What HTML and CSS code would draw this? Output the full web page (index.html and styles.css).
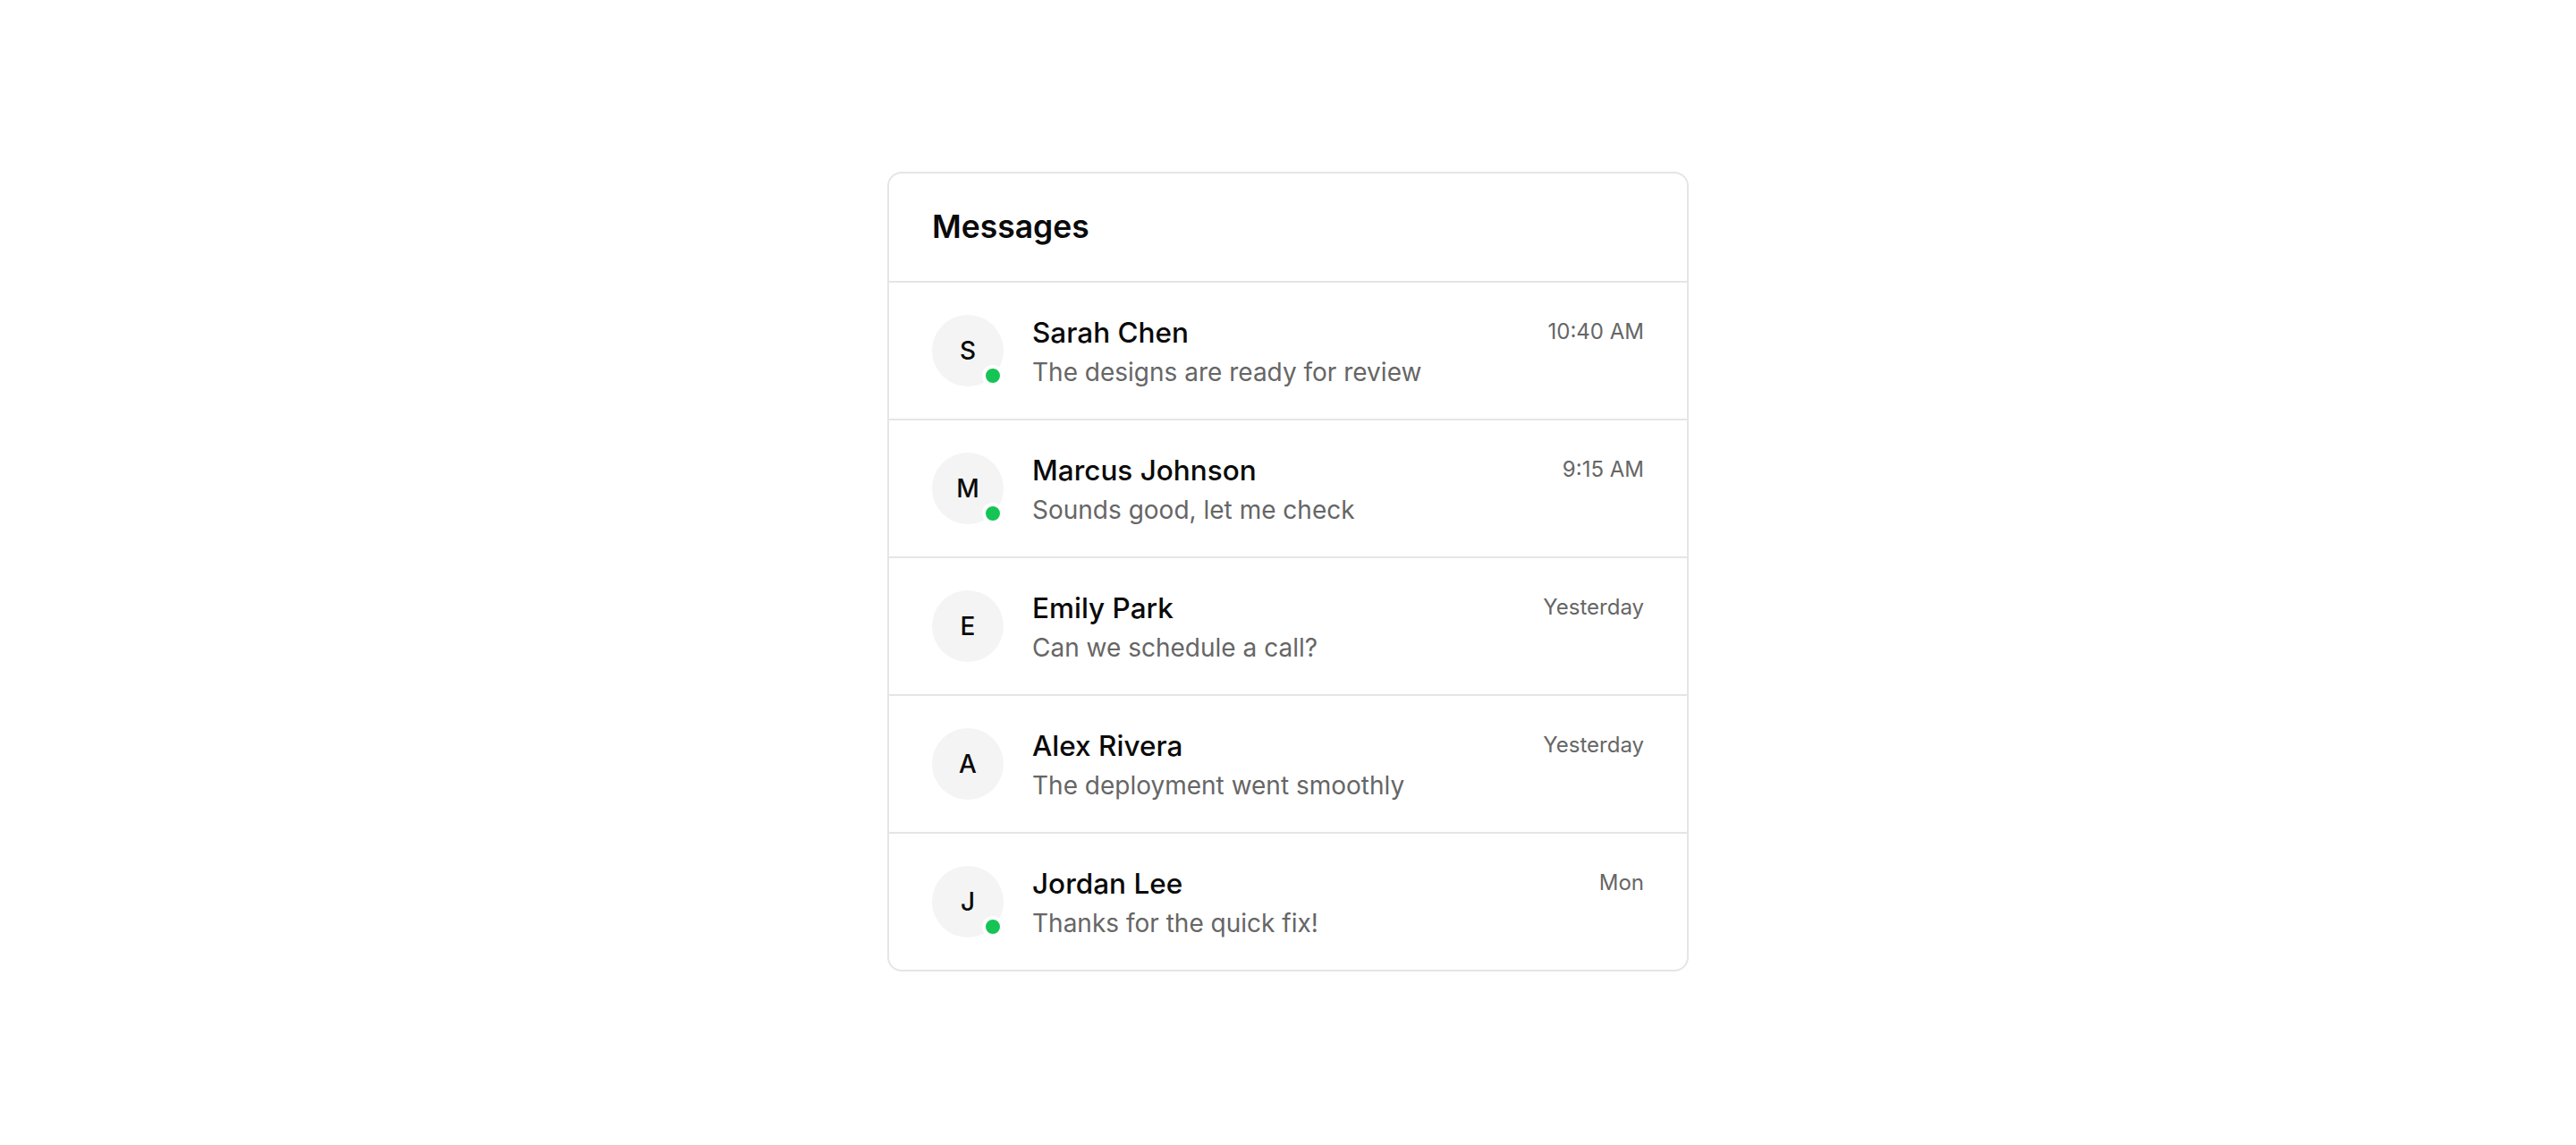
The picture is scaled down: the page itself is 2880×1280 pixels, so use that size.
FILE: index.html
```html
<!DOCTYPE html>
<html lang="en">
<head>
<meta charset="utf-8">
<title>Messages</title>
<link rel="stylesheet" href="styles.css">
</head>
<body>
<main class="page">
  <section class="card">
    <header class="card-header">
      <h1 class="title">Messages</h1>
    </header>
    <ul class="list">
      <li class="item">
        <div class="avatar"><span class="initial">S</span><span class="status"></span></div>
        <div class="content">
          <div class="top"><span class="name">Sarah Chen</span><span class="time">10:40 AM</span></div>
          <p class="preview">The designs are ready for review</p>
        </div>
      </li>
      <li class="item">
        <div class="avatar"><span class="initial">M</span><span class="status"></span></div>
        <div class="content">
          <div class="top"><span class="name">Marcus Johnson</span><span class="time">9:15 AM</span></div>
          <p class="preview">Sounds good, let me check</p>
        </div>
      </li>
      <li class="item">
        <div class="avatar"><span class="initial">E</span></div>
        <div class="content">
          <div class="top"><span class="name">Emily Park</span><span class="time">Yesterday</span></div>
          <p class="preview">Can we schedule a call?</p>
        </div>
      </li>
      <li class="item">
        <div class="avatar"><span class="initial">A</span></div>
        <div class="content">
          <div class="top"><span class="name">Alex Rivera</span><span class="time">Yesterday</span></div>
          <p class="preview">The deployment went smoothly</p>
        </div>
      </li>
      <li class="item">
        <div class="avatar"><span class="initial">J</span><span class="status"></span></div>
        <div class="content">
          <div class="top"><span class="name">Jordan Lee</span><span class="time">Mon</span></div>
          <p class="preview">Thanks for the quick fix!</p>
        </div>
      </li>
    </ul>
  </section>
</main>
</body>
</html>
```
FILE: styles.css
```css
* { box-sizing: border-box; }
html, body {
  margin: 0;
  padding: 0;
  background: #ffffff;
  font-family: Inter, "Noto Sans", "Liberation Sans", sans-serif;
  color: #0a0a0a;
}
.page {
  display: flex;
  justify-content: center;
  padding-top: 192px;
}
.card {
  width: 896px;
  border: 2px solid #e5e5e5;
  border-radius: 16px;
  background: #fff;
  overflow: hidden;
}
.card-header {
  padding: 32px 48px;
  border-bottom: 2px solid #e5e5e5;
}
.title {
  margin: 0;
  font-size: 35.5px;
  line-height: 56px;
  font-weight: 600;
  color: #0a0a0a;
}
.list {
  list-style: none;
  margin: 0;
  padding: 0;
}
.item {
  display: flex;
  align-items: center;
  gap: 32px;
  padding: 0 48px;
  height: 154px;
  border-bottom: 2px solid #e5e5e5;
}
.item:last-child { border-bottom: none; height: 152px; }
.avatar {
  position: relative;
  flex: none;
  width: 80px;
  height: 80px;
  border-radius: 50%;
  background: #f4f4f4;
  display: flex;
  align-items: center;
  justify-content: center;
}
.initial {
  font-size: 28px;
  font-weight: 500;
  color: #0a0a0a;
}
.status {
  position: absolute;
  right: 0;
  bottom: 0;
  width: 24px;
  height: 24px;
  border-radius: 50%;
  background: #16c455;
  border: 4px solid #ffffff;
}
.content {
  flex: 1;
  min-width: 0;
  display: flex;
  flex-direction: column;
}
.top {
  display: flex;
  justify-content: space-between;
  align-items: center;
}
.name {
  font-size: 31.5px;
  line-height: 47px;
  font-weight: 500;
  color: #0a0a0a;
}
.time {
  font-size: 24px;
  line-height: 36px;
  color: #666666;
}
.preview {
  margin: 0;
  font-size: 28px;
  line-height: 42px;
  color: #666666;
}
```
